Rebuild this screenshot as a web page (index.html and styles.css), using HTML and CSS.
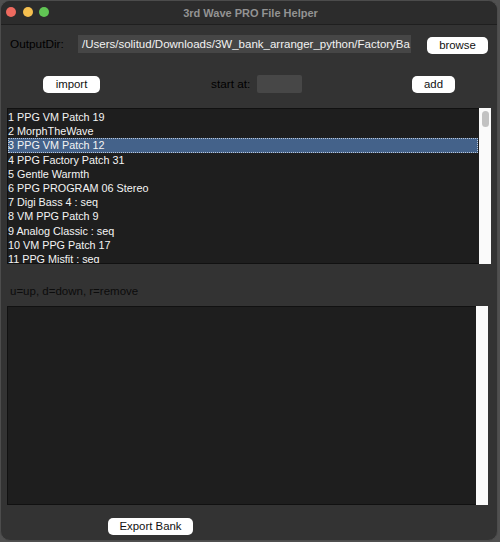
FILE: index.html
```html
<!DOCTYPE html>
<html lang="en">
<head>
    <meta charset="UTF-8">
    <meta name="viewport" content="width=device-width, initial-scale=1.0">
    <title>3rd Wave PRO File Helper</title>
    <link rel="stylesheet" href="styles.css">
</head>
<body>
    <div class="window">
        <div class="titlebar">
            <div class="lights">
                <span class="light light-red"></span>
                <span class="light light-yellow"></span>
                <span class="light light-green"></span>
            </div>
            <div class="title">3rd Wave PRO File Helper</div>
        </div>

        <div class="row row-output">
            <label class="label label-output">OutputDir:</label>
            <div class="entry entry-path">/Users/solitud/Downloads/3W_bank_arranger_python/FactoryBa</div>
            <button class="btn btn-browse">browse</button>
        </div>

        <div class="row row-actions">
            <button class="btn btn-import">import</button>
            <label class="label label-start">start at:</label>
            <div class="entry entry-start"></div>
            <button class="btn btn-add">add</button>
        </div>

        <div class="list-wrap">
            <ul class="listbox">
                <li>1 PPG VM Patch 19</li>
                <li>2 MorphTheWave</li>
                <li class="selected">3 PPG VM Patch 12</li>
                <li>4 PPG Factory Patch 31</li>
                <li>5 Gentle Warmth</li>
                <li>6 PPG PROGRAM 06 Stereo</li>
                <li>7 Digi Bass 4 : seq</li>
                <li>8 VM PPG Patch 9</li>
                <li>9 Analog Classic : seq</li>
                <li>10 VM PPG Patch 17</li>
                <li>11 PPG Misfit : seq</li>
            </ul>
            <div class="scrollbar"><div class="thumb"></div></div>
        </div>

        <div class="hint">u=up, d=down, r=remove</div>

        <div class="text-wrap">
            <div class="textbox"></div>
            <div class="scrollbar scrollbar-text"></div>
        </div>

        <div class="row row-export">
            <button class="btn btn-export">Export Bank</button>
        </div>
    </div>
</body>
</html>
```

FILE: styles.css
```css
body, html {
    margin: 0;
    padding: 0;
    width: 500px;
    height: 542px;
    overflow: hidden;
    background-color: #505050;
}
body {
    font-family: "Liberation Sans", Arial, sans-serif;
}
.window {
    width: 498px;
    height: 541px;
    box-sizing: border-box;
    background-color: #333333;
    border: 1px solid #4c4c4c;
    border-radius: 10px;
    overflow: hidden;
    display: flex;
    flex-direction: column;
}
.titlebar {
    position: relative;
    flex: none;
    height: 24px;
    box-sizing: border-box;
    display: flex;
    align-items: center;
    justify-content: center;
    background-color: #2c2c2c;
    border-bottom: 1px solid #1f1f1f;
}
.lights {
    position: absolute;
    left: 5px;
    top: 6px;
    display: flex;
    gap: 6.5px;
}
.light {
    width: 10px;
    height: 10px;
    border-radius: 50%;
}
.light-red {
    background-color: #ee6a5f;
}
.light-yellow {
    background-color: #f5bf4f;
}
.light-green {
    background-color: #61c554;
}
.title {
    padding-left: 3px;
    font-size: 11px;
    font-weight: bold;
    color: #939393;
}
.row {
    display: flex;
    align-items: center;
    flex: none;
}
.label {
    font-size: 11.8px;
    color: #000000;
}
.btn {
    height: 17px;
    padding: 0;
    border: none;
    border-radius: 5px;
    background-color: #ffffff;
    color: #111111;
    font-family: inherit;
    font-size: 11.4px;
    line-height: 17px;
}
.entry {
    box-sizing: border-box;
    background-color: #464646;
    color: #f2f2f2;
    font-size: 11.5px;
}
.row-output {
    height: 18px;
    margin-top: 10px;
    padding-left: 9px;
}
.label-output {
    width: 68px;
}
.entry-path {
    width: 333px;
    height: 18px;
    padding: 0 0 0 4px;
    line-height: 18px;
    white-space: nowrap;
    overflow: hidden;
}
.btn-browse {
    width: 61px;
    margin-left: 16px;
    margin-top: 3px;
}
.row-actions {
    height: 18px;
    margin-top: 22px;
    padding-left: 42px;
}
.btn-import {
    width: 57px;
}
.label-start {
    width: 46px;
    margin-left: 111px;
}
.entry-start {
    width: 45px;
    height: 18px;
    border-radius: 2px;
    background-color: #474747;
}
.btn-add {
    width: 43px;
    margin-left: 110px;
}
.list-wrap {
    flex: none;
    display: flex;
    height: 156px;
    margin: 15px 0 0 6px;
}
.listbox {
    width: 472px;
    height: 156px;
    margin: 0;
    padding: 1px 1px 0 0;
    box-sizing: border-box;
    overflow: hidden;
    list-style: none;
    background-color: #1e1e1e;
    border: 1px solid #111111;
    border-right: none;
    color: #f4f4f4;
    font-size: 10.8px;
}
.listbox li {
    height: 14.2px;
    line-height: 14.2px;
    white-space: nowrap;
}
.selected {
    background-color: #44628a;
    outline: 1px dotted #b9c6d8;
    outline-offset: -1px;
}
.scrollbar {
    width: 12px;
    box-sizing: border-box;
    padding: 3px 2px 0 3px;
    background-color: #fafafa;
}
.thumb {
    width: 7px;
    height: 16px;
    border-radius: 4px;
    background-color: #c2c2c2;
}
.hint {
    flex: none;
    height: 14px;
    line-height: 14px;
    margin: 20px 0 0 9px;
    font-size: 11.5px;
    color: #0c0c0c;
}
.text-wrap {
    flex: none;
    display: flex;
    height: 199px;
    margin: 8px 0 0 6px;
}
.textbox {
    width: 469px;
    box-sizing: border-box;
    background-color: #1e1e1e;
    border: 1px solid #111111;
    border-right: none;
}
.scrollbar-text {
    padding: 0;
}
.row-export {
    height: 17px;
    margin-top: 13px;
    padding-left: 107px;
}
.btn-export {
    width: 85px;
}
```
